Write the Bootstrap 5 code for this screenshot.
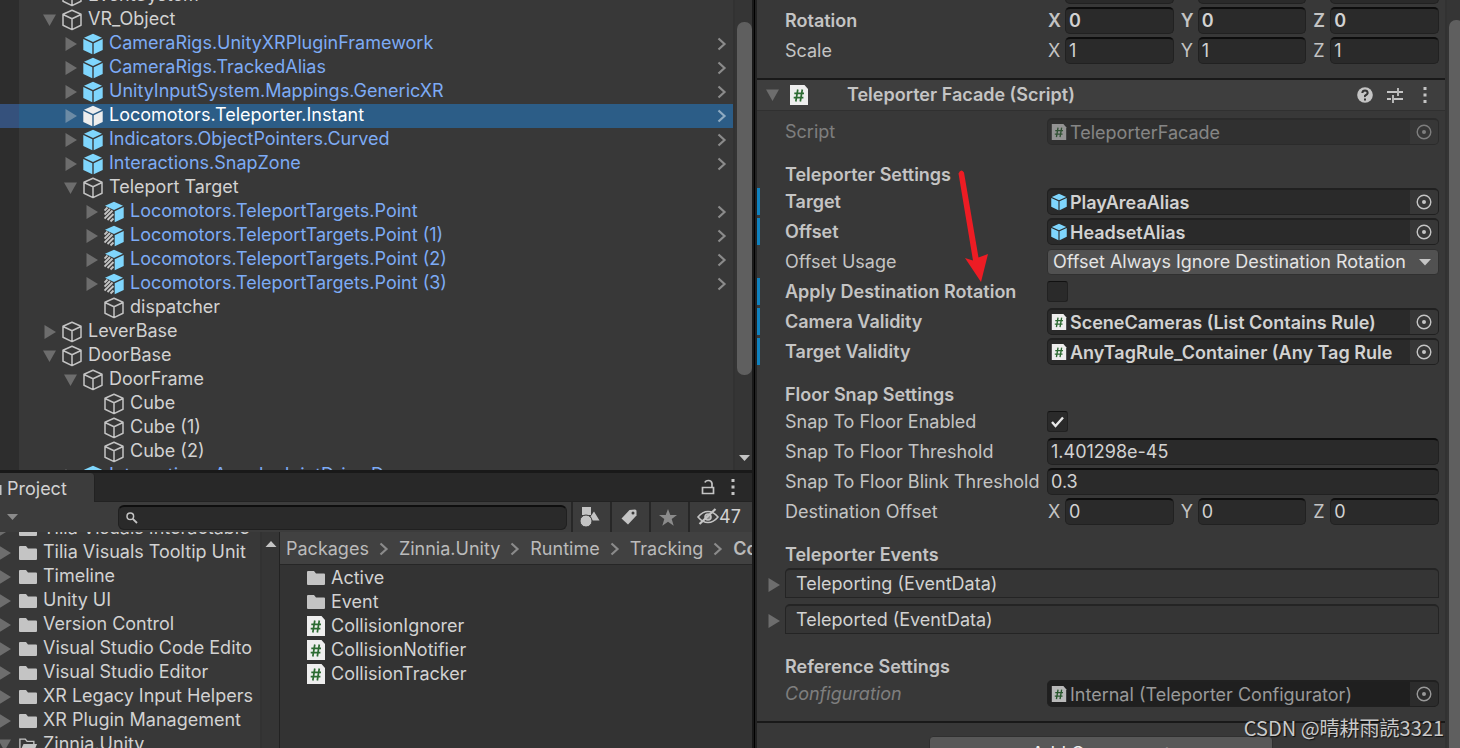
<!DOCTYPE html>
<html lang="en">
<head>
<meta charset="utf-8">
<meta name="viewport" content="width=device-width, initial-scale=1">
<title>Editor</title>
<link href="https://cdn.jsdelivr.net/npm/bootstrap@5.3.0/dist/css/bootstrap.min.css" rel="stylesheet">
<style>
  :root { --line:#191919; --panel:#383838; --bar:#3c3c3c; --field:#2a2a2a; --text:#d2d2d2; --label:#c4c4c4; --prefab:#7dabf5; }
  body { background:var(--line); color:var(--text); font-family:Inter,"Noto Sans CJK SC",sans-serif; font-size:18px; line-height:22px; }
  button, input, select { font:inherit; color:inherit; }
  button { background:none; border:0; padding:0; }
  a { color:inherit; text-decoration:none; }
  svg { display:block; flex:none; }
  .editor { display:grid; grid-template-columns:minmax(0,757fr) minmax(0,703fr); grid-template-rows:minmax(0,1fr); }
  .left { padding-right:5px; background:linear-gradient(to left,#222 2px,#000 2px,#000 3px,#191919 3px,#191919 5px,transparent 5px); display:grid; grid-template-rows:minmax(0,470fr) minmax(0,278fr); }
  /* hierarchy */
  .tree-area { background:linear-gradient(to right,#2d2d2d 19px,var(--panel) 19px); }
  .scrolled { margin-top:-16px; }
  .node { height:24px; padding:0 6px 0 43px; white-space:nowrap; }
  .node.d1 { padding-left:64px; } .node.d2 { padding-left:85px; }
  .node > span { padding-bottom:2px; margin-left:6px; }
  .node > .chev { margin-left:auto; color:#8b8b8b; }
  .fold { width:14px; margin-right:5px; color:#6d6d6d; flex:none; }
  .prefab > span { color:var(--prefab); }
  .picked { background:linear-gradient(to right,#35517c 19px,#2c5d87 19px); --cube:#eee; }
  .picked > span { color:#fff; } .picked .fold { color:#6c8ba5; } .picked > .chev { color:#8fabc2; }
  .gauge { width:19px; background:#353535; border-left:2px solid #323232; flex:none; }
  .thumb { background:#5f5f5f; border-radius:7px; width:15px; margin:22px 0 0 2px; height:75%; }
  .side .thumb { margin-top:20px; height:100%; }
  /* project */
  .project { border-top:3px solid var(--line); background:var(--panel); }
  .tabs { height:29px; background:#282828; border-bottom:1px solid #222; padding-right:17px; flex:none; }
  .tab { width:95px; background:var(--bar); border-right:1px solid #222; border-radius:0 4px 0 0; height:29px; padding-top:3px; }
  .tools { height:30px; background:var(--bar); flex:none; }
  .search { height:25px; margin-right:4px; border:1px solid #202020; border-top:2px solid #0e0e0e; border-radius:6px; background:var(--field); padding-left:7px; }
  .search input { background:none; border:0; outline:0; }
  .tools button { width:39px; height:30px; border-left:2px solid #272727; padding-right:4px; }
  .tools .count { width:64px; padding:0 0 0 7px; }
  .packages { flex:0 0 260px; }
  .packages .scrolled { margin-top:-15px; }
  .asset { height:24px; white-space:nowrap; }
  .packages .fold { margin:0 7px 0 -2px; }
  .packages .asset > span { margin-left:6px; padding-bottom:2px; }
  .crumbs { height:33px; background:#414141; border-bottom:1px solid #262626; padding:2px 0 0 6px; gap:10px; color:#bbb; white-space:nowrap; }
  .crumbs svg { color:#8b8b8b; }
  .files { background:#333; border-left:1px solid #222; }
  .files ul { padding:1px 0 0 27px; }
  .files .asset > span { margin-left:6px; }
  /* inspector */
  .inspector { background:var(--panel); }
  .props { overflow:hidden; }
  .peek { height:7px; }
  .prop { height:27px; margin-bottom:3px; padding:0 6px 0 28px; display:grid; grid-template-columns:minmax(0,258fr) minmax(0,392fr); gap:4px; align-items:center; flex:none; }
  .prop > label, .prop > .name { color:var(--label); overflow:hidden; white-space:nowrap; }
  .over { box-shadow:inset 3px 0 #0f81be; }
  .over, .bolder { font-weight:600; }
  .caption { font-weight:600; color:var(--label); font-size:18px; line-height:22px; height:22px; margin:16px 0 2px; padding-left:28px; flex:none; }
  .box { width:100%; min-width:0; height:27px; background:var(--field); border:1px solid #212121; border-top:2px solid #0d0d0d; border-radius:5px; padding:0 3px 1px; outline:0; }
  .axes { display:grid; grid-template-columns:repeat(3,minmax(0,1fr)); gap:6px; }
  .axes label { width:18px; flex:none; padding-left:1px; color:var(--label); }
  .pick { height:27px; background:var(--field); border:1px solid #202020; border-top-width:2px; border-radius:5px; padding-left:3px; overflow:hidden; }
  .pick input { background:none; border:0; outline:0; padding:1px 0 0; min-width:0; flex:1; margin-left:3px; }
  .pick button { width:28px; height:24px; background:#373737; color:#c4c4c4; flex:none; }
  .off { opacity:.5; margin-top:7px; }
  .dark .pick { background:#1f1f1f; } .dark .pick button { background:#2c2c2c; color:#999; } .dark input { color:#999; }
  .choice { height:26px; width:100%; border:1px solid #303030; border-radius:4px; background:#515151; appearance:none; color:#e4e4e4; padding:0 0 0 5px; outline:0; }
  .tick { appearance:none; width:21px; height:21px; margin:0; border:1px solid #212121; border-top-color:#111; border-radius:3px; background:var(--field); }
  .tick:checked { background-image:url("data:image/svg+xml,%3Csvg xmlns='http://www.w3.org/2000/svg' viewBox='0 0 19 19'%3E%3Cpath d='M4 10l3.5 4L15 5.5' fill='none' stroke='%23e8e8e8' stroke-width='2.4'/%3E%3C/svg%3E"); }
  .component { height:33px; background:#3e3e3e; border-top:2px solid var(--line); border-bottom:1px solid #303030; padding:0 18px 0 9px; margin-top:11px; flex:none; }
  .component .caption { margin:0 0 0 10px; }
  .component .tools-end { gap:14px; }
  .component .more { margin-left:6px; }
  .event { height:30px; margin-bottom:6px; padding:0 6px 0 10px; flex:none; }
  .event .fold { padding-top:4px; }
  .event > div { border:1px solid #242424; border-top-width:2px; border-radius:5px 5px 0 0; background:#353535; padding:0 10px; height:30px; }
  .finish { height:2px; margin:11px 0 13px; background:var(--line); border:0; opacity:1; flex:none; }
  .add { width:50%; height:36px; background:#585858; border:1px solid #303030; border-radius:4px; color:#eee; }
  .side { width:15px; }
  .pointer { position:absolute; left:196px; top:166px; }
  .credit { position:absolute; right:16px; bottom:6px; font:20px/28px "Noto Sans CJK SC",sans-serif; color:#c9c9c9; text-shadow:1px 1px 1px #111; }
</style>
</head>
<body class="overflow-hidden">
<svg width="0" height="0" class="position-absolute">
  <symbol id="right" viewBox="0 0 14 16"><path d="M1.500 1l11.500 7-11.500 7z" fill="currentColor"/></symbol>
  <symbol id="down" viewBox="0 0 14 16"><path d="M0 2.500h13L6.500 14z" fill="currentColor"/></symbol>
  <symbol id="chev" viewBox="0 0 10 14"><path d="M1.500 1.500L7.500 7l-6 5.500" fill="none" stroke="currentColor" stroke-width="2.200"/></symbol>
  <symbol id="obj" viewBox="0 0 20 22"><path d="M10 1.300L19 5.300v11L10 20.600 1 16.300v-11zM1 5.500l9 4.300 9-4.300M10 9.800v10.500" fill="none" stroke="#c4c4c4" stroke-width="1.500" stroke-linejoin="round"/></symbol>
  <symbol id="cube" viewBox="0 0 20 22"><g style="fill:var(--cube,#7fd6fd)"><path d="M10 .8l9 3.900-9 4.200-9-4.200zM.3 6l9 4.200v11L.3 17zM19.700 6l-9 4.200v11l9-4.200z"/></g></symbol>
  <symbol id="variant" viewBox="0 0 20 22"><path d="M10 .8l9 3.900-9 4.200-9-4.200zM19.700 6l-9 4.200v11l9-4.200z" fill="#7fd6fd"/><path d="M.5 9.500l3-3M.5 13.500l5.500-5.500M.5 17.500l8-8M3.500 19l6-6M6.500 20.500l3-3" stroke="#c4c4c4" stroke-width="1.900"/></symbol>
  <symbol id="dir" viewBox="0 0 18 16"><path d="M0 2Q0 1 1 1h6l2 2.500h8q1 0 1 1V14q0 1-1 1H1q-1 0-1-1z" fill="#c4c4c4"/></symbol>
  <symbol id="diropen" viewBox="0 0 20 16"><path d="M1 15V1.500h6l2 2.500h7.500V7M1 15" fill="none" stroke="#c4c4c4" stroke-width="1.500"/><path d="M1 15.500L5 7h15l-3.500 8.500z" fill="#c4c4c4"/></symbol>
  <symbol id="cs" viewBox="0 0 18 20"><path d="M0 0h14.500L18 4v16H0z" fill="#eee"/><path d="M7.800 4.500L5.800 16.500M12.300 4.500l-2 12M4.300 8.300H14M3.700 12.700h9.700" fill="none" stroke="#2c6b32" stroke-width="1.700"/></symbol>
  <symbol id="target" viewBox="0 0 16 16"><circle cx="8" cy="8" r="6.800" fill="none" stroke="currentColor" stroke-width="1.400"/><circle cx="8" cy="8" r="2" fill="currentColor"/></symbol>
  <symbol id="dots" viewBox="0 0 4 16"><path d="M.5 0h3v3h-3zM.5 6.500h3v3h-3zM.5 13h3v3h-3z" fill="#c4c4c4"/></symbol>
</svg>

<main class="editor vh-100">
  <div class="left">
    <section class="d-flex overflow-hidden" aria-label="Hierarchy">
      <div class="tree-area flex-grow-1 overflow-hidden">
        <div class="scrolled">
          <div class="node d-flex align-items-center"><div class="fold"></div><svg width="20" height="22"><use href="#obj"/></svg><span>EventSystem</span></div>
          <div class="node d-flex align-items-center"><button class="fold" aria-label="Collapse"><svg width="14" height="16"><use href="#down"/></svg></button><svg width="20" height="22"><use href="#obj"/></svg><span>VR_Object</span></div>
          <div class="node d1 prefab d-flex align-items-center"><button class="fold" aria-label="Expand"><svg width="14" height="16"><use href="#right"/></svg></button><svg width="20" height="22"><use href="#cube"/></svg><span>CameraRigs.UnityXRPluginFramework</span><svg class="chev" width="10" height="14"><use href="#chev"/></svg></div>
          <div class="node d1 prefab d-flex align-items-center"><button class="fold" aria-label="Expand"><svg width="14" height="16"><use href="#right"/></svg></button><svg width="20" height="22"><use href="#cube"/></svg><span>CameraRigs.TrackedAlias</span><svg class="chev" width="10" height="14"><use href="#chev"/></svg></div>
          <div class="node d1 prefab d-flex align-items-center"><button class="fold" aria-label="Expand"><svg width="14" height="16"><use href="#right"/></svg></button><svg width="20" height="22"><use href="#cube"/></svg><span>UnityInputSystem.Mappings.GenericXR</span><svg class="chev" width="10" height="14"><use href="#chev"/></svg></div>
          <div class="node d1 prefab picked d-flex align-items-center"><button class="fold" aria-label="Expand"><svg width="14" height="16"><use href="#right"/></svg></button><svg width="20" height="22"><use href="#cube"/></svg><span>Locomotors.Teleporter.Instant</span><svg class="chev" width="10" height="14"><use href="#chev"/></svg></div>
          <div class="node d1 prefab d-flex align-items-center"><button class="fold" aria-label="Expand"><svg width="14" height="16"><use href="#right"/></svg></button><svg width="20" height="22"><use href="#cube"/></svg><span>Indicators.ObjectPointers.Curved</span><svg class="chev" width="10" height="14"><use href="#chev"/></svg></div>
          <div class="node d1 prefab d-flex align-items-center"><button class="fold" aria-label="Expand"><svg width="14" height="16"><use href="#right"/></svg></button><svg width="20" height="22"><use href="#cube"/></svg><span>Interactions.SnapZone</span><svg class="chev" width="10" height="14"><use href="#chev"/></svg></div>
          <div class="node d1 d-flex align-items-center"><button class="fold" aria-label="Collapse"><svg width="14" height="16"><use href="#down"/></svg></button><svg width="20" height="22"><use href="#obj"/></svg><span>Teleport Target</span></div>
          <div class="node d2 prefab d-flex align-items-center"><button class="fold" aria-label="Expand"><svg width="14" height="16"><use href="#right"/></svg></button><svg width="20" height="22"><use href="#variant"/></svg><span>Locomotors.TeleportTargets.Point</span><svg class="chev" width="10" height="14"><use href="#chev"/></svg></div>
          <div class="node d2 prefab d-flex align-items-center"><button class="fold" aria-label="Expand"><svg width="14" height="16"><use href="#right"/></svg></button><svg width="20" height="22"><use href="#variant"/></svg><span>Locomotors.TeleportTargets.Point (1)</span><svg class="chev" width="10" height="14"><use href="#chev"/></svg></div>
          <div class="node d2 prefab d-flex align-items-center"><button class="fold" aria-label="Expand"><svg width="14" height="16"><use href="#right"/></svg></button><svg width="20" height="22"><use href="#variant"/></svg><span>Locomotors.TeleportTargets.Point (2)</span><svg class="chev" width="10" height="14"><use href="#chev"/></svg></div>
          <div class="node d2 prefab d-flex align-items-center"><button class="fold" aria-label="Expand"><svg width="14" height="16"><use href="#right"/></svg></button><svg width="20" height="22"><use href="#variant"/></svg><span>Locomotors.TeleportTargets.Point (3)</span><svg class="chev" width="10" height="14"><use href="#chev"/></svg></div>
          <div class="node d2 d-flex align-items-center"><div class="fold"></div><svg width="20" height="22"><use href="#obj"/></svg><span>dispatcher</span></div>
          <div class="node d-flex align-items-center"><button class="fold" aria-label="Expand"><svg width="14" height="16"><use href="#right"/></svg></button><svg width="20" height="22"><use href="#obj"/></svg><span>LeverBase</span></div>
          <div class="node d-flex align-items-center"><button class="fold" aria-label="Collapse"><svg width="14" height="16"><use href="#down"/></svg></button><svg width="20" height="22"><use href="#obj"/></svg><span>DoorBase</span></div>
          <div class="node d1 d-flex align-items-center"><button class="fold" aria-label="Collapse"><svg width="14" height="16"><use href="#down"/></svg></button><svg width="20" height="22"><use href="#obj"/></svg><span>DoorFrame</span></div>
          <div class="node d2 d-flex align-items-center"><div class="fold"></div><svg width="20" height="22"><use href="#obj"/></svg><span>Cube</span></div>
          <div class="node d2 d-flex align-items-center"><div class="fold"></div><svg width="20" height="22"><use href="#obj"/></svg><span>Cube (1)</span></div>
          <div class="node d2 d-flex align-items-center"><div class="fold"></div><svg width="20" height="22"><use href="#obj"/></svg><span>Cube (2)</span></div>
          <div class="node d1 prefab d-flex align-items-center"><button class="fold" aria-label="Expand"><svg width="14" height="16"><use href="#right"/></svg></button><svg width="20" height="22"><use href="#cube"/></svg><span>Interactions.AngularJointDrive.Door</span></div>
        </div>
      </div>
      <div class="gauge d-flex flex-column justify-content-between overflow-hidden">
        <div class="thumb"></div>
        <svg class="mb-2" width="19" height="8" viewBox="0 0 19 8"><path d="M4 1h11L9.500 7z" fill="#c4c4c4"/></svg>
      </div>
    </section>

    <section class="project d-flex flex-column overflow-hidden" aria-label="Project">
      <div class="tabs d-flex align-items-center">
        <button class="tab d-flex align-items-center"><svg width="7" height="16" viewBox="0 0 7 16"><path d="M0 4h1.500v10H0z" fill="#c4c4c4"/></svg>Project</button>
        <button class="ms-auto" aria-label="Lock"><svg width="14" height="17" viewBox="0 0 14 17"><path d="M1.500 8.500h11v6h-11zM11 8V4.500Q10.500 1.500 7.500 1.500T4 3.500" fill="none" stroke="#c4c4c4" stroke-width="1.700"/></svg></button>
        <button class="ms-3" aria-label="Menu"><svg width="4" height="16"><use href="#dots"/></svg></button>
      </div>
      <div class="tools d-flex align-items-center">
        <svg class="ms-1" width="114" height="8" viewBox="0 0 114 8"><path d="M3 1h11L8.500 7z" fill="#8b8b8b"/></svg>
        <div class="search flex-grow-1 d-flex align-items-center">
          <svg width="12" height="12" viewBox="0 0 12 12"><circle cx="4.300" cy="4.300" r="3.300" fill="none" stroke="#c4c4c4" stroke-width="1.500"/><path d="M6.800 6.800L11 11" stroke="#c4c4c4" stroke-width="1.800"/></svg>
          <input class="flex-grow-1" type="text" aria-label="Search">
        </div>
        <button aria-label="Search by type"><svg class="mx-auto" width="20" height="20" viewBox="0 0 20 20" fill="#c4c4c4"><path d="M2 0h9v8H2zM14 4.500l5.500 9h-7l-2-4z"/><circle cx="6" cy="14" r="6" stroke="#3c3c3c"/></svg></button>
        <button aria-label="Search by label"><svg class="mx-auto" width="16" height="16" viewBox="0 0 16 16"><path d="M8.500 1L14 .5q1.500 0 1.500 1.500v4.500L7 15.500.5 9.500z" fill="#c4c4c4"/><circle cx="12" cy="4" r="1.500" fill="#3c3c3c"/></svg></button>
        <button aria-label="Favorites"><svg class="mx-auto" width="18" height="17" viewBox="0 0 18 17"><path d="M9 0l2.300 6H18l-5.300 4 2 6.700L9 12.700l-5.700 4 2-6.700L0 6h6.700z" fill="#8b8b8b"/></svg></button>
        <button class="count d-flex align-items-center"><svg width="22" height="18" viewBox="0 0 22 18" fill="none" stroke="#c4c4c4" stroke-width="1.600"><path d="M1 9q4.500-5.500 10-5.500T21 9q-4.500 5.500-10 5.500T1 9z"/><circle cx="11" cy="9" r="3" fill="#8b8b8b"/><path d="M2.500 16L18.500 1" stroke-width="2.200"/></svg><span>47</span></button>
      </div>
      <div class="d-flex flex-grow-1 overflow-hidden">
        <div class="packages overflow-hidden">
          <ul class="scrolled list-unstyled">
            <li class="asset d-flex align-items-center"><button class="fold" aria-label="Expand"><svg width="14" height="16"><use href="#right"/></svg></button><svg width="18" height="16"><use href="#dir"/></svg><span>Tilia Visuals Interactable</span></li>
            <li class="asset d-flex align-items-center"><button class="fold" aria-label="Expand"><svg width="14" height="16"><use href="#right"/></svg></button><svg width="18" height="16"><use href="#dir"/></svg><span>Tilia Visuals Tooltip Unit</span></li>
            <li class="asset d-flex align-items-center"><button class="fold" aria-label="Expand"><svg width="14" height="16"><use href="#right"/></svg></button><svg width="18" height="16"><use href="#dir"/></svg><span>Timeline</span></li>
            <li class="asset d-flex align-items-center"><button class="fold" aria-label="Expand"><svg width="14" height="16"><use href="#right"/></svg></button><svg width="18" height="16"><use href="#dir"/></svg><span>Unity UI</span></li>
            <li class="asset d-flex align-items-center"><button class="fold" aria-label="Expand"><svg width="14" height="16"><use href="#right"/></svg></button><svg width="18" height="16"><use href="#dir"/></svg><span>Version Control</span></li>
            <li class="asset d-flex align-items-center"><button class="fold" aria-label="Expand"><svg width="14" height="16"><use href="#right"/></svg></button><svg width="18" height="16"><use href="#dir"/></svg><span>Visual Studio Code Edito</span></li>
            <li class="asset d-flex align-items-center"><button class="fold" aria-label="Expand"><svg width="14" height="16"><use href="#right"/></svg></button><svg width="18" height="16"><use href="#dir"/></svg><span>Visual Studio Editor</span></li>
            <li class="asset d-flex align-items-center"><button class="fold" aria-label="Expand"><svg width="14" height="16"><use href="#right"/></svg></button><svg width="18" height="16"><use href="#dir"/></svg><span>XR Legacy Input Helpers</span></li>
            <li class="asset d-flex align-items-center"><button class="fold" aria-label="Expand"><svg width="14" height="16"><use href="#right"/></svg></button><svg width="18" height="16"><use href="#dir"/></svg><span>XR Plugin Management</span></li>
            <li class="asset d-flex align-items-center"><button class="fold" aria-label="Collapse"><svg width="14" height="16"><use href="#down"/></svg></button><svg width="18" height="16"><use href="#diropen"/></svg><span>Zinnia.Unity</span></li>
          </ul>
        </div>
        <div class="gauge"><svg class="mt-2" width="19" height="8" viewBox="0 0 19 8"><path d="M3.500 7h11L9 1z" fill="#c4c4c4"/></svg></div>
        <div class="files flex-grow-1 overflow-hidden">
          <nav class="crumbs d-flex align-items-center overflow-hidden" aria-label="Path">
            <a href="#">Packages</a><svg width="10" height="14"><use href="#chev"/></svg>
            <a href="#">Zinnia.Unity</a><svg width="10" height="14"><use href="#chev"/></svg>
            <a href="#">Runtime</a><svg width="10" height="14"><use href="#chev"/></svg>
            <a href="#">Tracking</a><svg width="10" height="14"><use href="#chev"/></svg>
            <a href="#" class="bolder">Collision</a>
          </nav>
          <ul class="list-unstyled m-0">
            <li class="asset d-flex align-items-center"><svg width="18" height="16"><use href="#dir"/></svg><span>Active</span></li>
            <li class="asset d-flex align-items-center"><svg width="18" height="16"><use href="#dir"/></svg><span>Event</span></li>
            <li class="asset d-flex align-items-center"><svg width="18" height="20"><use href="#cs"/></svg><span>CollisionIgnorer</span></li>
            <li class="asset d-flex align-items-center"><svg width="18" height="20"><use href="#cs"/></svg><span>CollisionNotifier</span></li>
            <li class="asset d-flex align-items-center"><svg width="18" height="20"><use href="#cs"/></svg><span>CollisionTracker</span></li>
          </ul>
        </div>
      </div>
    </section>
  </div>

  <section class="inspector d-flex position-relative overflow-hidden" aria-label="Inspector">
    <form class="props flex-grow-1 d-flex flex-column">
      <div class="peek overflow-hidden flex-shrink-0 d-flex flex-column justify-content-end">
        <div class="prop"><span></span>
          <div class="axes"><div class="d-flex"><label for="px"></label><input class="box" id="px" type="text" aria-label="Position X"></div><div class="d-flex"><label for="py"></label><input class="box" id="py" type="text" aria-label="Position Y"></div><div class="d-flex"><label for="pz"></label><input class="box" id="pz" type="text" aria-label="Position Z"></div></div></div>
      </div>
      <div class="prop bolder"><span class="name">Rotation</span>
        <div class="axes"><div class="d-flex align-items-center"><label for="rx">X</label><input class="box" id="rx" type="text" value="0"></div><div class="d-flex align-items-center"><label for="ry">Y</label><input class="box" id="ry" type="text" value="0"></div><div class="d-flex align-items-center"><label for="rz">Z</label><input class="box" id="rz" type="text" value="0"></div></div></div>
      <div class="prop"><span class="name">Scale</span>
        <div class="axes"><div class="d-flex align-items-center"><label for="sx">X</label><input class="box" id="sx" type="text" value="1"></div><div class="d-flex align-items-center"><label for="sy">Y</label><input class="box" id="sy" type="text" value="1"></div><div class="d-flex align-items-center"><label for="sz">Z</label><input class="box" id="sz" type="text" value="1"></div></div></div>

      <header class="component d-flex align-items-center">
        <button type="button" class="fold" aria-label="Collapse"><svg width="14" height="16"><use href="#down"/></svg></button>
        <svg class="ms-1" width="20" height="20" viewBox="0 0 20 20"><use href="#cs" x="1" width="18" height="20"/></svg>
        <h2 class="caption flex-grow-1">Teleporter Facade (Script)</h2>
        <div class="tools-end d-flex align-items-center">
          <button type="button" aria-label="Help"><svg width="16" height="16" viewBox="0 0 16 16"><circle cx="8" cy="8" r="7.800" fill="#c4c4c4"/><path d="M5.300 6Q5.500 3.500 8 3.500T10.700 6Q10.500 7.300 9 8T8 10M8 11.500v2" fill="none" stroke="#333" stroke-width="2"/></svg></button>
          <button type="button" aria-label="Presets"><svg width="16" height="16" viewBox="0 0 16 16"><path d="M0 5h10M12 5h4M11 1v8M0 12h4M7 12h9M6 8v8" fill="none" stroke="#c4c4c4" stroke-width="1.800"/></svg></button>
          <button type="button" class="more" aria-label="Menu"><svg width="4" height="16"><use href="#dots"/></svg></button>
        </div>
      </header>

      <div class="prop off"><label for="script">Script</label>
        <div class="pick d-flex align-items-center"><svg width="16" height="16"><use href="#cs"/></svg><input id="script" type="text" value="TeleporterFacade" readonly><button type="button" aria-label="Select script"><svg class="mx-auto" width="16" height="16"><use href="#target"/></svg></button></div></div>

      <h3 class="caption">Teleporter Settings</h3>
      <div class="prop over"><label for="tg">Target</label>
        <div class="pick d-flex align-items-center"><svg width="16" height="18"><use href="#cube"/></svg><input id="tg" type="text" value="PlayAreaAlias" readonly><button type="button" aria-label="Select target"><svg class="mx-auto" width="16" height="16"><use href="#target"/></svg></button></div></div>
      <div class="prop over"><label for="os">Offset</label>
        <div class="pick d-flex align-items-center"><svg width="16" height="18"><use href="#cube"/></svg><input id="os" type="text" value="HeadsetAlias" readonly><button type="button" aria-label="Select offset"><svg class="mx-auto" width="16" height="16"><use href="#target"/></svg></button></div></div>
      <div class="prop"><label for="ou">Offset Usage</label>
        <div class="position-relative"><select class="choice" id="ou"><option>Offset Always Ignore Destination Rotation</option></select><svg class="position-absolute end-0 top-50 translate-middle-y me-2 pe-none" width="12" height="8" viewBox="0 0 12 8"><path d="M0 1h12L6 7.500z" fill="#c4c4c4"/></svg></div></div>
      <div class="prop over"><label for="ad">Apply Destination Rotation</label><input class="tick" id="ad" type="checkbox"></div>
      <div class="prop over"><label for="cv">Camera Validity</label>
        <div class="pick d-flex align-items-center"><svg width="16" height="16"><use href="#cs"/></svg><input id="cv" type="text" value="SceneCameras (List Contains Rule)" readonly><button type="button" aria-label="Select camera validity"><svg class="mx-auto" width="16" height="16"><use href="#target"/></svg></button></div></div>
      <div class="prop over"><label for="tv">Target Validity</label>
        <div class="pick d-flex align-items-center"><svg width="16" height="16"><use href="#cs"/></svg><input id="tv" type="text" value="AnyTagRule_Container (Any Tag Rule" readonly><button type="button" aria-label="Select target validity"><svg class="mx-auto" width="16" height="16"><use href="#target"/></svg></button></div></div>

      <h3 class="caption">Floor Snap Settings</h3>
      <div class="prop"><label for="fe">Snap To Floor Enabled</label><input class="tick" id="fe" type="checkbox" checked></div>
      <div class="prop"><label for="ft">Snap To Floor Threshold</label><input class="box" id="ft" type="text" value="1.401298e-45"></div>
      <div class="prop"><label for="fb">Snap To Floor Blink Threshold</label><input class="box" id="fb" type="text" value="0.3"></div>
      <div class="prop"><span class="name">Destination Offset</span>
        <div class="axes"><div class="d-flex align-items-center"><label for="dx">X</label><input class="box" id="dx" type="text" value="0"></div><div class="d-flex align-items-center"><label for="dy">Y</label><input class="box" id="dy" type="text" value="0"></div><div class="d-flex align-items-center"><label for="dz">Z</label><input class="box" id="dz" type="text" value="0"></div></div></div>

      <h3 class="caption">Teleporter Events</h3>
      <div class="event d-flex align-items-center"><button type="button" class="fold me-1" aria-label="Expand"><svg width="14" height="16"><use href="#right"/></svg></button><div class="flex-grow-1 d-flex align-items-center">Teleporting (EventData)</div></div>
      <div class="event d-flex align-items-center"><button type="button" class="fold me-1" aria-label="Expand"><svg width="14" height="16"><use href="#right"/></svg></button><div class="flex-grow-1 d-flex align-items-center">Teleported (EventData)</div></div>

      <h3 class="caption">Reference Settings</h3>
      <div class="prop dark"><label class="fst-italic opacity-50" for="cf">Configuration</label>
        <div class="pick d-flex align-items-center"><svg class="opacity-75" width="16" height="16"><use href="#cs"/></svg><input id="cf" type="text" value="Internal (Teleporter Configurator)" readonly><button type="button" aria-label="Select configuration"><svg class="mx-auto" width="16" height="16"><use href="#target"/></svg></button></div></div>
      <hr class="finish">
      <button type="button" class="add mx-auto flex-shrink-0">Add Component</button>
    </form>
    <div class="gauge side"><div class="thumb"></div></div>
    <svg class="pointer" width="40" height="120" viewBox="0 0 40 120"><path d="M5.500 7.500Q8 2 11 6.500L25.500 91.500 35 88 28 116 12 92l8 2.500z" fill="#ed1c24"/></svg>
    <div class="credit">CSDN @晴耕雨読3321</div>
  </section>
</main>
<script src="https://cdn.jsdelivr.net/npm/bootstrap@5.3.0/dist/js/bootstrap.bundle.min.js"></script>
</body>
</html>
